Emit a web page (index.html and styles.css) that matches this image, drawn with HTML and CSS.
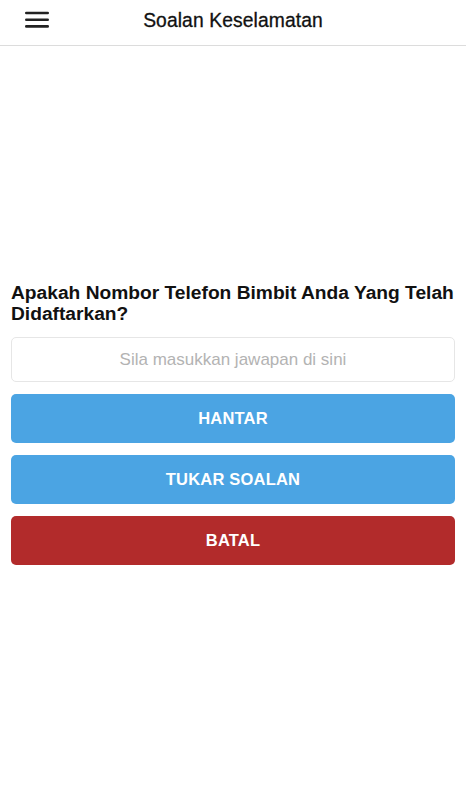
FILE: index.html
```html
<!DOCTYPE html>
<html lang="ms">
<head>
<meta charset="utf-8">
<title>Soalan Keselamatan</title>
<link rel="stylesheet" href="styles.css">
</head>
<body>
<header class="topbar">
  <button class="menu-btn" aria-label="Menu">
    <svg width="24" height="18" viewBox="0 0 24 18"><rect x="0" y="0.7" width="24" height="2.6" rx="1.3" fill="#222"/><rect x="0" y="7.4" width="24" height="2.6" rx="1.3" fill="#222"/><rect x="0" y="14.1" width="24" height="2.6" rx="1.3" fill="#222"/></svg>
  </button>
  <h1 class="title">Soalan Keselamatan</h1>
</header>
<main class="content">
  <h2 class="question">Apakah Nombor Telefon Bimbit Anda Yang Telah Didaftarkan?</h2>
  <input class="answer" type="text" placeholder="Sila masukkan jawapan di sini">
  <button class="btn btn-blue">HANTAR</button>
  <button class="btn btn-blue">TUKAR SOALAN</button>
  <button class="btn btn-red">BATAL</button>
</main>
</body>
</html>
```
FILE: styles.css
```css
* { box-sizing: border-box; }
html, body { margin: 0; padding: 0; background: #fff; }
body { font-family: "Liberation Sans", Arial, sans-serif; color: #111; }
.topbar {
  height: 46px;
  border-bottom: 1px solid #dcdcdc;
  display: flex;
  align-items: center;
  justify-content: center;
  position: relative;
  padding-bottom: 4px;
}
.menu-btn {
  position: absolute;
  left: 25px;
  top: 11px;
  padding: 0;
  border: 0;
  background: none;
  width: 24px;
  height: 18px;
  display: block;
}
.menu-btn svg { display: block; }
.title {
  margin: 0;
  font-size: 19.3px;
  font-weight: normal;
  -webkit-text-stroke: 0.3px #111;
  color: #111;
  letter-spacing: 0.1px;
}
.content {
  padding: 236px 11px 0 11px;
  display: flex;
  flex-direction: column;
}
.question {
  margin: 0 0 13px 0;
  font-size: 19.2px;
  line-height: 21px;
  font-weight: bold;
  color: #111;
}
.answer {
  height: 45px;
  border: 1px solid #e6e6e6;
  border-radius: 5px;
  font-family: inherit;
  font-size: 17px;
  text-align: center;
  margin: 0 0 12px 0;
  outline: none;
}
.answer::placeholder { color: #b3b3b3; }
.btn {
  height: 49px;
  border: 0;
  border-radius: 5px;
  color: #fff;
  font-family: inherit;
  font-size: 16.5px;
  font-weight: bold;
  margin: 0 0 12px 0;
  letter-spacing: 0.2px;
}
.btn-blue { background: #4ba4e3; }
.btn-red { background: #b22b2b; }
```
